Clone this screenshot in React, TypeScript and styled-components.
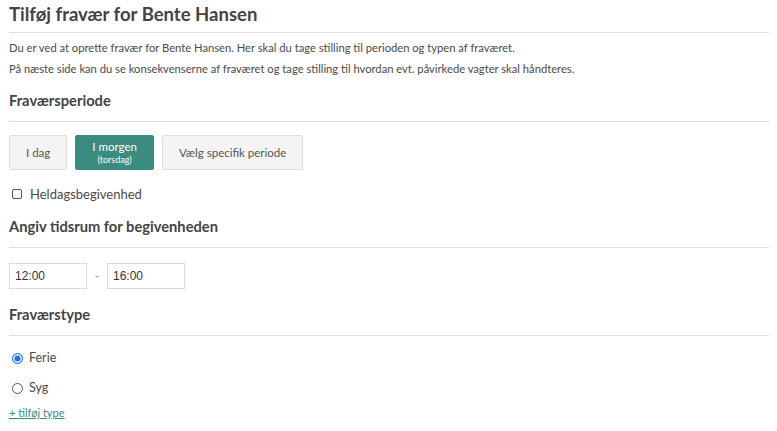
import React from "react";
import styled, { createGlobalStyle } from "styled-components";

const Global = createGlobalStyle`
  html, body { margin: 0; padding: 0; background: #fff; }
  body { font-family: "Lato", "Open Sans", sans-serif; color: #4a4a4a; }
  * { box-sizing: border-box; }
`;

const Page = styled.div`
  padding: 0 8px 0 9px;
  display: flex;
  flex-direction: column;
`;

const Title = styled.h1`
  margin: 0;
  padding: 2px 0 5px;
  font-size: 18.5px;
  line-height: 25px;
  font-weight: 700;
  color: #444;
  border-bottom: 1px solid #dcdcdc;
`;

const Intro = styled.div`
  margin-top: 4px;
  display: flex;
  flex-direction: column;
`;

const Para = styled.p`
  margin: 0;
  font-size: 11.2px;
  line-height: 21px;
  color: #4a4a4a;
`;

const SectionTitle = styled.h2<{ $mt: number }>`
  margin: ${(p) => p.$mt}px 0 0;
  padding: 0 0 11px;
  font-size: 14.7px;
  line-height: 20px;
  font-weight: 700;
  color: #444;
  border-bottom: 1px solid #dcdcdc;
`;

const ButtonRow = styled.div`
  margin-top: 13px;
  display: flex;
  gap: 8px;
`;

const PeriodButton = styled.button<{ $active?: boolean }>`
  height: 35px;
  padding: 0 16px;
  border-radius: 2px;
  border: 1px solid ${(p) => (p.$active ? "#3a8b80" : "#dddddd")};
  background: ${(p) => (p.$active ? "#3a8b80" : "#f4f4f4")};
  color: ${(p) => (p.$active ? "#ffffff" : "#555")};
  font-family: inherit;
  font-size: 11.5px;
  line-height: 14px;
  display: flex;
  flex-direction: column;
  align-items: center;
  justify-content: center;
`;

const Sub = styled.span`
  font-size: 9px;
  line-height: 11px;
`;

const CheckRow = styled.label`
  margin-top: 14px;
  display: flex;
  align-items: center;
  gap: 8px;
  font-size: 13px;
  line-height: 20px;
  color: #4a4a4a;
`;

const CheckBox = styled.span`
  margin-left: 3px;
  width: 10px;
  height: 10px;
  border: 1px solid #555;
  border-radius: 2px;
  background: #fff;
`;

const TimeRow = styled.div`
  margin-top: 15px;
  display: flex;
  align-items: center;
`;

const TimeInput = styled.div`
  width: 78px;
  height: 26px;
  border: 1px solid #d9d9d9;
  padding: 0 5px;
  display: flex;
  align-items: center;
  font-family: "Liberation Sans", Arial, sans-serif;
  font-size: 12px;
  color: #333;
`;

const Dash = styled.span`
  width: 20px;
  text-align: center;
  font-family: "Liberation Sans", Arial, sans-serif;
  font-size: 12px;
  color: #999;
`;

const RadioList = styled.div`
  margin-top: 12px;
  display: flex;
  flex-direction: column;
  gap: 10px;
`;

const RadioRow = styled.label`
  display: flex;
  align-items: center;
  gap: 6px;
  font-size: 12.5px;
  line-height: 20px;
  color: #4a4a4a;
`;

const Radio = styled.span<{ $checked?: boolean }>`
  margin-left: 3px;
  width: 11px;
  height: 11px;
  border-radius: 50%;
  border: 1px solid ${(p) => (p.$checked ? "#1a73e8" : "#555")};
  background: ${(p) => (p.$checked ? "#1a73e8" : "#fff")};
  box-shadow: ${(p) => (p.$checked ? "inset 0 0 0 1.5px #fff" : "none")};
`;

const AddLink = styled.a`
  margin-top: 7px;
  font-size: 11px;
  line-height: 16px;
  color: #3a8b80;
  text-decoration: underline;
  align-self: flex-start;
`;

export default function App() {
  return (
    <>
      <Global />
      <Page>
        <Title>Tilføj fravær for Bente Hansen</Title>
        <Intro>
          <Para>
            Du er ved at oprette fravær for Bente Hansen. Her skal du tage stilling til perioden og typen af fraværet.
          </Para>
          <Para>
            På næste side kan du se konsekvenserne af fraværet og tage stilling til hvordan evt. påvirkede vagter skal håndteres.
          </Para>
        </Intro>
        <SectionTitle $mt={11}>Fraværsperiode</SectionTitle>
        <ButtonRow>
          <PeriodButton>I dag</PeriodButton>
          <PeriodButton $active>
            <span>I morgen</span>
            <Sub>(torsdag)</Sub>
          </PeriodButton>
          <PeriodButton>Vælg specifik periode</PeriodButton>
        </ButtonRow>
        <CheckRow>
          <CheckBox />
          Heldagsbegivenhed
        </CheckRow>
        <SectionTitle $mt={12}>Angiv tidsrum for begivenheden</SectionTitle>
        <TimeRow>
          <TimeInput>12:00</TimeInput>
          <Dash>-</Dash>
          <TimeInput>16:00</TimeInput>
        </TimeRow>
        <SectionTitle $mt={15}>Fraværstype</SectionTitle>
        <RadioList>
          <RadioRow>
            <Radio $checked />
            Ferie
          </RadioRow>
          <RadioRow>
            <Radio />
            Syg
          </RadioRow>
        </RadioList>
        <AddLink href="#">+ tilføj type</AddLink>
      </Page>
    </>
  );
}
